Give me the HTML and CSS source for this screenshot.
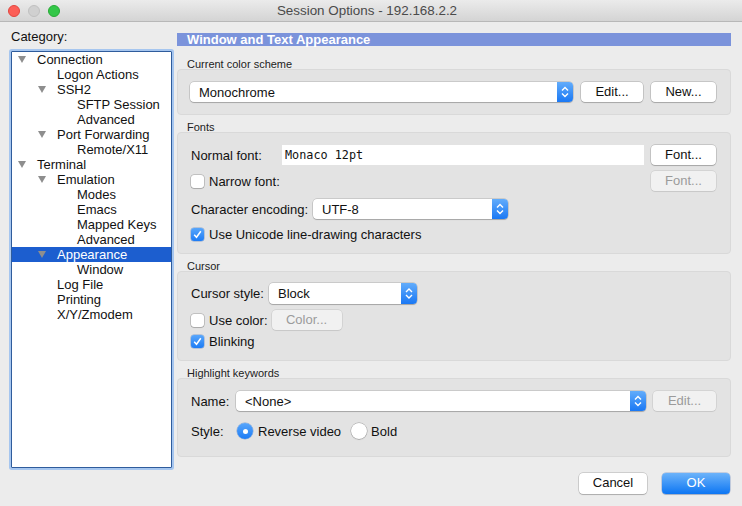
FILE: index.html
```html
<!DOCTYPE html>
<html>
<head>
<meta charset="utf-8">
<link rel="stylesheet" href="styles.css">
</head>
<body>
<div class="window">
  <div class="titlebar">
    <div class="lights">
      <span class="light red"></span>
      <span class="light gray"></span>
      <span class="light green"></span>
    </div>
    <div class="title">Session Options - 192.168.2.2</div>
  </div>
  <div class="main">
    <div class="left">
      <div class="cat-label">Category:</div>
      <div class="tree">
        <div class="row l0"><span class="caret"></span>Connection</div>
        <div class="row l1"><span class="nocaret"></span>Logon Actions</div>
        <div class="row l1"><span class="caret"></span>SSH2</div>
        <div class="row l2"><span class="nocaret"></span>SFTP Session</div>
        <div class="row l2"><span class="nocaret"></span>Advanced</div>
        <div class="row l1"><span class="caret"></span>Port Forwarding</div>
        <div class="row l2"><span class="nocaret"></span>Remote/X11</div>
        <div class="row l0"><span class="caret"></span>Terminal</div>
        <div class="row l1"><span class="caret"></span>Emulation</div>
        <div class="row l2"><span class="nocaret"></span>Modes</div>
        <div class="row l2"><span class="nocaret"></span>Emacs</div>
        <div class="row l2"><span class="nocaret"></span>Mapped Keys</div>
        <div class="row l2"><span class="nocaret"></span>Advanced</div>
        <div class="row l1 selected"><span class="caret"></span>Appearance</div>
        <div class="row l2"><span class="nocaret"></span>Window</div>
        <div class="row l1"><span class="nocaret"></span>Log File</div>
        <div class="row l1"><span class="nocaret"></span>Printing</div>
        <div class="row l1"><span class="nocaret"></span>X/Y/Zmodem</div>
      </div>
    </div>
    <div class="right">
      <div class="header">Window and Text Appearance</div>

      <div class="glabel first">Current color scheme</div>
      <div class="gbox box1">
        <div class="line">
          <div class="popup grow"><span class="ptext">Monochrome</span><span class="stepper"><svg width="16" height="20" viewBox="0 0 16 20"><path d="M5 8.5 L8 5.5 L11 8.5 M5 11.5 L8 14.5 L11 11.5" fill="none" stroke="#fff" stroke-width="1.4"/></svg></span></div>
          <div class="btn w62">Edit...</div>
          <div class="btn w65">New...</div>
        </div>
      </div>

      <div class="glabel">Fonts</div>
      <div class="gbox box2">
        <div class="line">
          <div class="lbl w91">Normal font:</div>
          <div class="field">Monaco 12pt</div>
          <div class="btn w65">Font...</div>
        </div>
        <div class="line mt6">
          <span class="check"></span><span class="clbl">Narrow font:</span>
          <div class="btn w65 disabled push">Font...</div>
        </div>
        <div class="line mt8">
          <div class="lbl w122">Character encoding:</div>
          <div class="popup w195"><span class="ptext">UTF-8</span><span class="stepper"><svg width="16" height="20" viewBox="0 0 16 20"><path d="M5 8.5 L8 5.5 L11 8.5 M5 11.5 L8 14.5 L11 11.5" fill="none" stroke="#fff" stroke-width="1.4"/></svg></span></div>
        </div>
        <div class="line mt6 h18">
          <span class="check on"><svg width="13" height="13" viewBox="0 0 13 13"><path d="M3.2 6.8 L5.5 9.3 L9.8 3.2" fill="none" stroke="#fff" stroke-width="1.5"/></svg></span><span class="clbl">Use Unicode line-drawing characters</span>
        </div>
      </div>

      <div class="glabel">Cursor</div>
      <div class="gbox box3">
        <div class="line h21">
          <div class="lbl w78">Cursor style:</div>
          <div class="popup w148 h21"><span class="ptext">Block</span><span class="stepper"><svg width="16" height="21" viewBox="0 0 16 21"><path d="M5 9 L8 6 L11 9 M5 12 L8 15 L11 12" fill="none" stroke="#fff" stroke-width="1.4"/></svg></span></div>
        </div>
        <div class="line mt6">
          <span class="check"></span><span class="clbl">Use color:</span>
          <div class="btn w70 disabled ml4">Color...</div>
        </div>
        <div class="line mt3 h16">
          <span class="check on"><svg width="13" height="13" viewBox="0 0 13 13"><path d="M3.2 6.8 L5.5 9.3 L9.8 3.2" fill="none" stroke="#fff" stroke-width="1.5"/></svg></span><span class="clbl">Blinking</span>
        </div>
      </div>

      <div class="glabel">Highlight keywords</div>
      <div class="gbox box4">
        <div class="line">
          <div class="lbl w45">Name:</div>
          <div class="popup grow"><span class="ptext">&lt;None&gt;</span><span class="stepper"><svg width="16" height="20" viewBox="0 0 16 20"><path d="M5 8.5 L8 5.5 L11 8.5 M5 11.5 L8 14.5 L11 11.5" fill="none" stroke="#fff" stroke-width="1.4"/></svg></span></div>
          <div class="btn w63 disabled">Edit...</div>
        </div>
        <div class="line mt12 h16">
          <div class="lbl w46">Style:</div>
          <span class="radio on"></span><span class="rlbl">Reverse video</span>
          <span class="radio ml10"></span><span class="rlbl r2">Bold</span>
        </div>
      </div>

      <div class="actions">
        <div class="btn w68">Cancel</div>
        <div class="btn w68 primary">OK</div>
      </div>
    </div>
  </div>
</div>
</body>
</html>
```
FILE: styles.css
```css
* { box-sizing: border-box; }
html, body { margin: 0; padding: 0; }
body {
  width: 742px;
  height: 506px;
  background: #ececec;
  font-family: "Liberation Sans", Arial, sans-serif;
  font-size: 13px;
  color: #111;
  overflow: hidden;
}
.window { width: 742px; height: 506px; background: #ececec; }

.titlebar {
  height: 22px;
  background: linear-gradient(#ebebeb, #d4d4d4);
  border-bottom: 1px solid #b8b8b8;
  display: flex;
  align-items: center;
}
.lights { display: flex; gap: 8px; padding-left: 8px; padding-top: 1px; }
.light { width: 12px; height: 12px; border-radius: 50%; display: block; }
.light.red { background: #fc5f57; border: 0.5px solid #e2463f; }
.light.gray { background: #d0d0d0; border: 0.5px solid #c0c0c0; }
.light.green { background: #33c748; border: 0.5px solid #27aa35; }
.title {
  flex: 1;
  text-align: center;
  color: #4a4a4a;
  font-size: 13.4px;
  margin-left: -68px;
}

.main { display: flex; padding: 7px 11px 0 11px; }
.left { width: 161px; }
.cat-label { height: 16px; line-height: 16px; margin-bottom: 6px; }
.tree {
  width: 161px;
  height: 417px;
  background: #fff;
  border: 1px solid #2f5c9c;
  box-shadow: 0 0 0 2px #a6c6ef;
  border-radius: 1px;
}
.row { height: 15px; line-height: 15px; display: flex; align-items: center; white-space: nowrap; }
.row.l0 { padding-left: 6px; }
.row.l1 { padding-left: 26px; }
.row.l2 { padding-left: 46px; }
.row.selected { background: #1c5ecf; color: #fff; }
.caret, .nocaret { width: 19px; height: 15px; display: inline-block; flex: none; position: relative; }
.caret::before {
  content: "";
  position: absolute;
  left: 0; top: 4px;
  border-left: 4px solid transparent;
  border-right: 4px solid transparent;
  border-top: 7px solid #8e8e8e;
}

.right { width: 554px; margin-left: 5px; padding-top: 4px; }
.header {
  height: 13px;
  line-height: 13px;
  background: #7b93db;
  color: #fff;
  font-weight: bold;
  font-size: 13px;
  padding-left: 10px;
  white-space: nowrap;
}
.glabel {
  font-size: 11px;
  height: 12px;
  line-height: 15px;
  padding-left: 10px;
  margin-top: 5px;
  color: #222;
  white-space: nowrap;
}
.glabel.first { margin-top: 11px; }
.gbox {
  background: #e3e3e3;
  border: 1px solid #d9d9d9;
  border-radius: 4px;
  padding: 12px 14px 0 13px;
}
.box1 { height: 46px; padding-left: 12px; }
.box2 { height: 122px; }
.box3 { height: 90px; padding-top: 11px; }
.box4 { height: 79px; }

.line { display: flex; align-items: center; height: 20px; }
.h16 { height: 16px; }
.h18 { height: 18px; }
.h21 { height: 21px; }
.mt3 { margin-top: 3px; }
.mt6 { margin-top: 6px; }
.mt8 { margin-top: 8px; }
.mt12 { margin-top: 12px; }
.ml4 { margin-left: 4px; }
.ml10 { margin-left: 10px; }
.push { margin-left: auto; }
.grow { flex: 1; }

.lbl { white-space: nowrap; flex: none; }
.w45 { width: 45px; }
.w46 { width: 46px; }
.w62 { width: 62px; }
.w63 { width: 63px; }
.w65 { width: 65px; }
.w68 { width: 68px; }
.w70 { width: 70px; }
.w78 { width: 78px; }
.w91 { width: 91px; }
.w122 { width: 122px; }
.w148 { width: 148px; }
.w195 { width: 195px; }

.popup {
  height: 20px;
  background: #fff;
  border-radius: 4px;
  box-shadow: 0 0 0 0.5px rgba(0,0,0,0.22), 0 1px 1px rgba(0,0,0,0.18);
  display: flex;
  align-items: center;
  flex: none;
}
.popup.grow { flex: 1; }
.popup.h21 { height: 21px; }
.ptext { flex: 1; padding-left: 9px; white-space: nowrap; }
.stepper {
  width: 16px;
  height: 100%;
  background: linear-gradient(#62acfb, #1a78f4);
  border-radius: 0 4px 4px 0;
  display: flex;
}
.box1 .line > .btn { margin-left: 8px; }
.box4 .line > .btn { margin-left: 7px; }
.box2 .line > .field + .btn { margin-left: 7px; }

.field {
  flex: 1;
  height: 20px;
  background: #fff;
  font-family: "DejaVu Sans Mono", "Liberation Mono", monospace;
  font-size: 11.8px;
  line-height: 20px;
  padding-left: 3px;
}

.btn {
  height: 20px;
  line-height: 19px;
  text-align: center;
  background: #fff;
  border-radius: 4px;
  box-shadow: 0 0 0 0.5px rgba(0,0,0,0.25), 0 1px 1px rgba(0,0,0,0.16);
  flex: none;
  white-space: nowrap;
  color: #111;
}
.btn.disabled {
  background: #f1f1f1;
  color: #9b9b9b;
  box-shadow: 0 0 0 0.5px rgba(0,0,0,0.13), 0 1px 1px rgba(0,0,0,0.06);
}
.btn.primary {
  background: linear-gradient(#6cb3fa, #0d76f3);
  color: #fff;
  box-shadow: 0 0 0 0.5px rgba(0,60,160,0.35), 0 1px 1px rgba(0,0,0,0.15);
}
.actions {
  display: flex;
  justify-content: flex-end;
  gap: 15px;
  margin-top: 16px;
  margin-right: 1px;
}
.actions .btn { height: 21px; line-height: 20px; }

.check {
  width: 13px;
  height: 13px;
  flex: none;
  background: #fff;
  border-radius: 3px;
  box-shadow: 0 0 0 0.5px rgba(0,0,0,0.3), 0 1px 1px rgba(0,0,0,0.12);
  display: inline-flex;
}
.check.on { background: linear-gradient(#58a6fb, #1d7cf5); box-shadow: 0 0 0 0.5px rgba(0,70,170,0.4); }
.clbl { margin-left: 5px; white-space: nowrap; }

.radio {
  width: 16px;
  height: 16px;
  flex: none;
  border-radius: 50%;
  background: #fff;
  box-shadow: 0 0 0 0.5px rgba(0,0,0,0.3), 0 1px 1px rgba(0,0,0,0.12);
  position: relative;
}
.radio.on { background: linear-gradient(#58a6fb, #1d7cf5); box-shadow: 0 0 0 0.5px rgba(0,70,170,0.4); }
.radio.on::after {
  content: "";
  position: absolute;
  left: 5.5px; top: 5.5px;
  width: 5px; height: 5px;
  border-radius: 50%;
  background: #fff;
}
.rlbl { margin-left: 5px; white-space: nowrap; }
.rlbl.r2 { margin-left: 4px; }
```
